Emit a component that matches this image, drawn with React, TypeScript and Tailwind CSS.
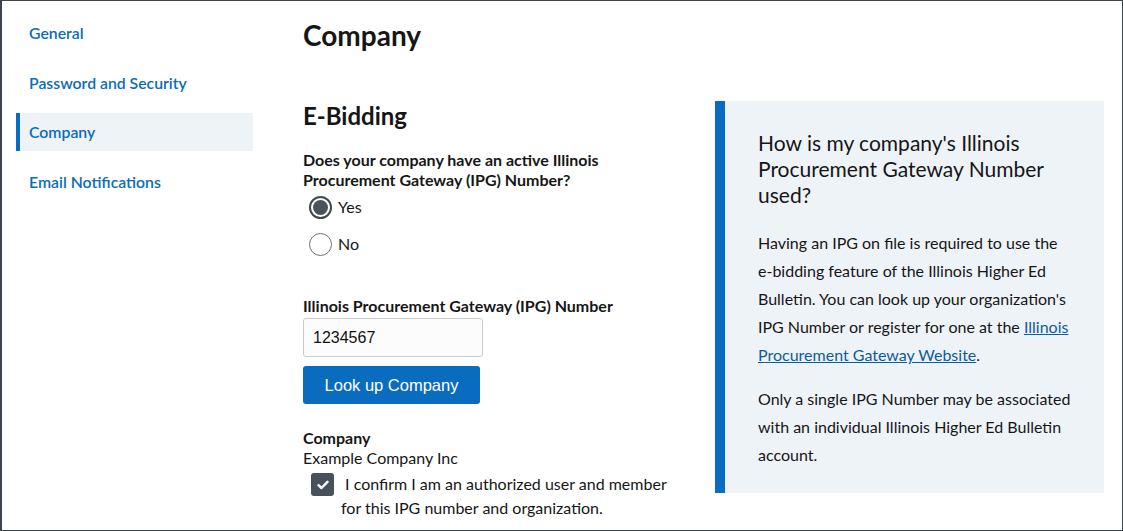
import React from "react";

const lato = { fontFamily: "Lato, 'Noto Sans', sans-serif" } as const;

function Radio({ checked, label }: { checked: boolean; label: string }) {
  return (
    <label className="flex items-center h-[30px] ml-[6px] gap-[6px] text-[16px] text-[#161616]">
      {checked ? (
        <span className="w-[23px] h-[23px] rounded-full border-2 border-[#3f4852] bg-white flex items-center justify-center">
          <span className="w-[15px] h-[15px] rounded-full bg-[#4a525c]" />
        </span>
      ) : (
        <span className="w-[23px] h-[23px] rounded-full border-[1.5px] border-[#6b7076] bg-white" />
      )}
      <span>{label}</span>
    </label>
  );
}

export default function App() {
  const nav = ["General", "Password and Security", "Company", "Email Notifications"];
  return (
    <div
      className="w-[1123px] h-[531px] bg-white border border-l-2 border-[#3c434a] flex overflow-hidden text-[#161616]"
      style={lato}
    >
      <nav className="w-[251px] shrink-0 pl-[14px] pt-[13px] flex flex-col gap-[11.5px]">
        {nav.map((n) => (
          <div
            key={n}
            className={
              "h-[38px] flex items-center text-[15.8px] font-semibold text-[#0a6cbc] pl-[9px] border-l-4 " +
              (n === "Company" ? "bg-[#eef3f8] border-[#0a6cc0]" : "border-transparent")
            }
          >
            {n}
          </div>
        ))}
      </nav>
      <main className="ml-[50px] flex-1 pr-[18px]">
        <h1 className="text-[28px] font-bold leading-[34px] mt-[17px]">Company</h1>
        <div className="flex mt-[49px]">
          <section className="w-[372px] shrink-0">
            <h2 className="text-[24px] font-bold leading-[30px]">E-Bidding</h2>
            <p className="mt-[19px] text-[16px] font-bold leading-[20px] w-[320px]">
              Does your company have an active Illinois Procurement Gateway (IPG) Number?
            </p>
            <div className="mt-[2px] flex flex-col gap-[7px]">
              <Radio checked label="Yes" />
              <Radio checked={false} label="No" />
            </div>
            <div className="mt-[37px] text-[16px] font-bold leading-[20px]">
              Illinois Procurement Gateway (IPG) Number
            </div>
            <div
              className="mt-[2px] w-[180px] h-[39px] border border-[#c8ccd0] rounded-[3px] bg-[#fcfcfc] flex items-center pl-[9px] text-[16px] text-[#111]"
              style={{ fontFamily: "'Liberation Sans', Arial, sans-serif" }}
            >
              1234567
            </div>
            <button
              className="mt-[9px] w-[177px] h-[38px] bg-[#0a6cbf] rounded-[3px] text-white text-[16.5px] flex items-center justify-center"
              style={{ fontFamily: "'Liberation Sans', Arial, sans-serif" }}
            >
              Look up Company
            </button>
            <div className="mt-[24px] text-[16px] font-bold leading-[20px]">Company</div>
            <div className="text-[16px] leading-[20px]">Example Company Inc</div>
            <div className="flex items-start mt-[4px]">
              <span className="ml-[8px] mt-[1px] w-[23px] h-[23px] rounded-[3px] bg-[#48515b] flex items-center justify-center shrink-0">
                <svg width="12" height="10" viewBox="0 0 12 10">
                  <path d="M1.5 5.2 L4.5 8 L10.5 1.8" stroke="white" strokeWidth="2.4" fill="none" strokeLinecap="round" strokeLinejoin="round" />
                </svg>
              </span>
              <span className="ml-[7px] text-[16px] leading-[24px] w-[330px]">
                &nbsp;I confirm I am an authorized user and member for this IPG number and organization.
              </span>
            </div>
          </section>
          <aside className="ml-auto w-[389px] h-[392px] bg-[#eef3f8] border-l-[10px] border-[#0a6cc0] pl-[33px] pr-[30px] pt-[29px]">
            <h3 className="text-[21px] leading-[26px] font-normal text-[#161616]">
              How is my company's Illinois Procurement Gateway Number used?
            </h3>
            <p className="mt-[21px] text-[16px] leading-[28px]">
              Having an IPG on file is required to use the <span className="whitespace-nowrap">e-bidding</span> feature of the Illinois Higher Ed Bulletin. You can look up your organization's IPG Number or register for one at the{" "}
              <a className="underline text-[#0b5c9e]">Illinois Procurement Gateway Website</a>.
            </p>
            <p className="mt-[16px] text-[16px] leading-[28px]">
              Only a single IPG Number may be associated with an individual Illinois Higher Ed Bulletin account.
            </p>
          </aside>
        </div>
      </main>
    </div>
  );
}
